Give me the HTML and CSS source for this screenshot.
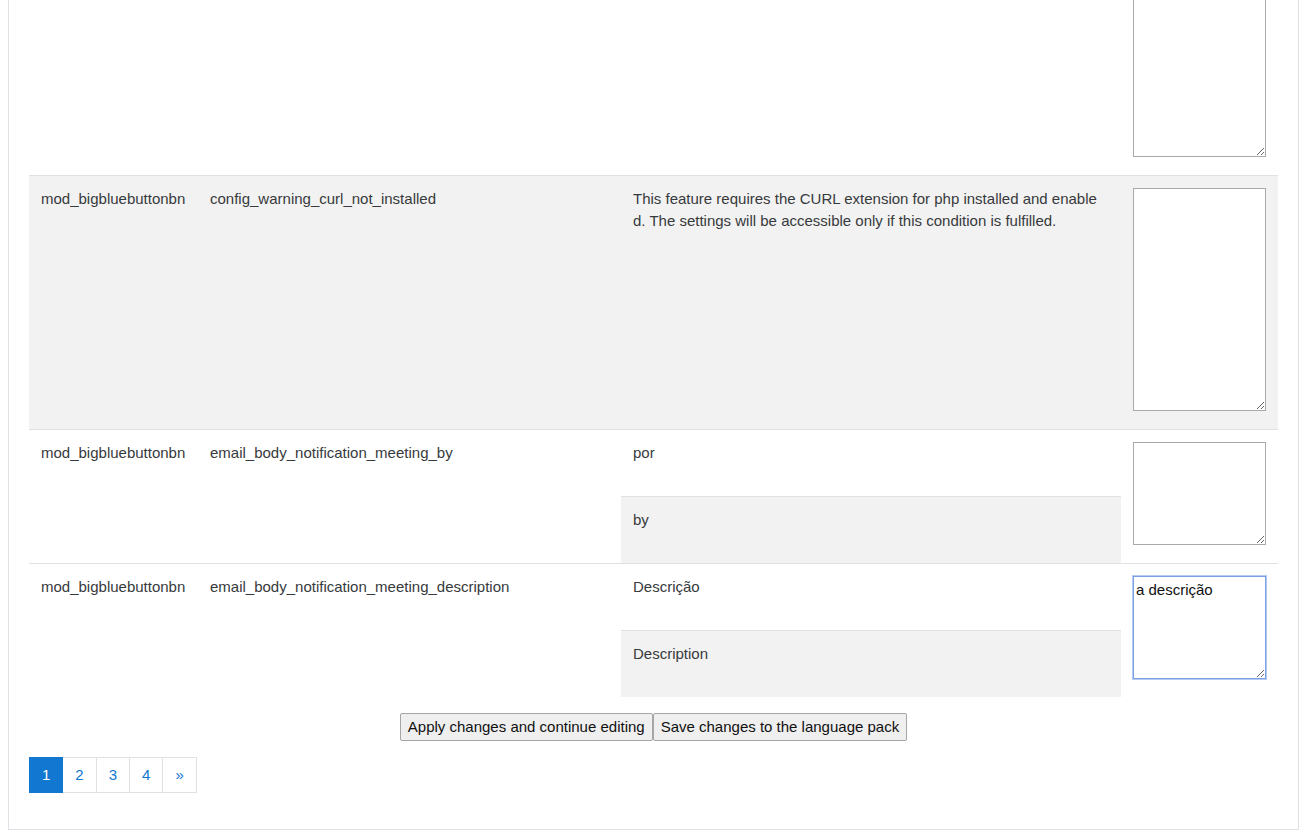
FILE: index.html
```html
<!DOCTYPE html>
<html lang="en">
<head>
<meta charset="utf-8">
<title>Language customisation</title>
<link rel="stylesheet" href="styles.css">
</head>
<body>
<div class="page">
  <form class="translator">
    <table class="strings">
      <colgroup>
        <col class="col-component">
        <col class="col-id">
        <col class="col-original">
        <col class="col-local">
      </colgroup>
      <tbody>
        <tr>
          <td></td>
          <td></td>
          <td></td>
          <td class="local"><textarea class="ta ta-tall"></textarea></td>
        </tr>
        <tr class="shaded">
          <td>mod_bigbluebuttonbn</td>
          <td>config_warning_curl_not_installed</td>
          <td><p class="wrap-text">This feature requires the CURL extension for php installed and enabled. The settings will be accessible only if this condition is fulfilled.</p></td>
          <td class="local"><textarea class="ta ta-tall"></textarea></td>
        </tr>
        <tr>
          <td>mod_bigbluebuttonbn</td>
          <td>email_body_notification_meeting_by</td>
          <td class="split">
            <div class="master">por</div>
            <div class="english">by</div>
          </td>
          <td class="local"><textarea class="ta ta-short"></textarea></td>
        </tr>
        <tr>
          <td>mod_bigbluebuttonbn</td>
          <td>email_body_notification_meeting_description</td>
          <td class="split">
            <div class="master">Descrição</div>
            <div class="english">Description</div>
          </td>
          <td class="local"><textarea class="ta ta-short is-focused">a descrição</textarea></td>
        </tr>
      </tbody>
    </table>
    <div class="actions">
      <button type="button" class="btn">Apply changes and continue editing</button><button type="button" class="btn">Save changes to the language pack</button>
    </div>
  </form>
  <ul class="pagination">
    <li class="active"><a class="page-link" href="#">1</a></li>
    <li><a class="page-link" href="#">2</a></li>
    <li><a class="page-link" href="#">3</a></li>
    <li><a class="page-link" href="#">4</a></li>
    <li><a class="page-link" href="#">»</a></li>
  </ul>
</div>
</body>
</html>
```

FILE: styles.css
```css
html {
  overflow: hidden;
}

body {
  margin: 0 8px;
  font-family: "Liberation Sans", Arial, sans-serif;
  font-size: 15px;
  line-height: 1.5;
  color: #373a3c;
  background: #fff;
}

.page {
  margin-top: -100px;
  margin-right: 3px;
  border: 1px solid #dee2e6;
  padding: 20px;
}

.strings {
  width: 100%;
  border-collapse: collapse;
  table-layout: fixed;
}

.col-component { width: 169px; }
.col-id { width: 423px; }
.col-original { width: 500px; }
.col-local { width: 157px; }

.strings td {
  padding: 12px;
  vertical-align: top;
  border-top: 1px solid #dee2e6;
}

.strings tr.shaded td {
  background: #f2f2f2;
}

.wrap-text {
  margin: 0;
  margin-right: 8px;
  line-height: 22px;
  word-break: break-all;
}

.strings td.split {
  padding: 0;
}

.master,
.english {
  box-sizing: border-box;
  padding: 12px;
}

.master {
  height: 66px;
}

.english {
  height: 67px;
  border-top: 1px solid #dee2e6;
  background: #f2f2f2;
}

.ta {
  display: block;
  box-sizing: border-box;
  width: 133px;
  margin: 0 0 6px;
  padding: 2px;
  border: 1px solid #a9a9a9;
  border-radius: 0;
  font-family: "Liberation Sans", Arial, sans-serif;
  font-size: 15px;
  line-height: 1.5;
  color: #111;
  background: #fff;
}

.ta-tall { height: 223px; }
.ta-short { height: 103px; }

.ta.is-focused {
  border-color: #7a9fe6;
  outline: 1px solid #b7cbf2;
}

.actions {
  display: flex;
  justify-content: center;
  margin-top: 16px;
}

.btn {
  margin: 0;
  padding: 4px 7px;
  font-family: "Liberation Sans", Arial, sans-serif;
  font-size: 15px;
  line-height: 18px;
  color: #111;
  background: #efefef;
  border: 1px solid #a6a6a6;
  border-radius: 2px;
}

.pagination {
  display: flex;
  list-style: none;
  margin: 16px 0 16px;
  padding: 0;
}

.page-link {
  display: block;
  padding: 8px 12px;
  line-height: 18px;
  color: #1177d1;
  text-decoration: none;
  border: 1px solid #dee2e6;
  margin-left: -1px;
  background: #fff;
}

.pagination li:first-child .page-link {
  margin-left: 0;
}

.pagination .active .page-link {
  position: relative;
  color: #fff;
  background: #1177d1;
  border-color: #1177d1;
}
```
